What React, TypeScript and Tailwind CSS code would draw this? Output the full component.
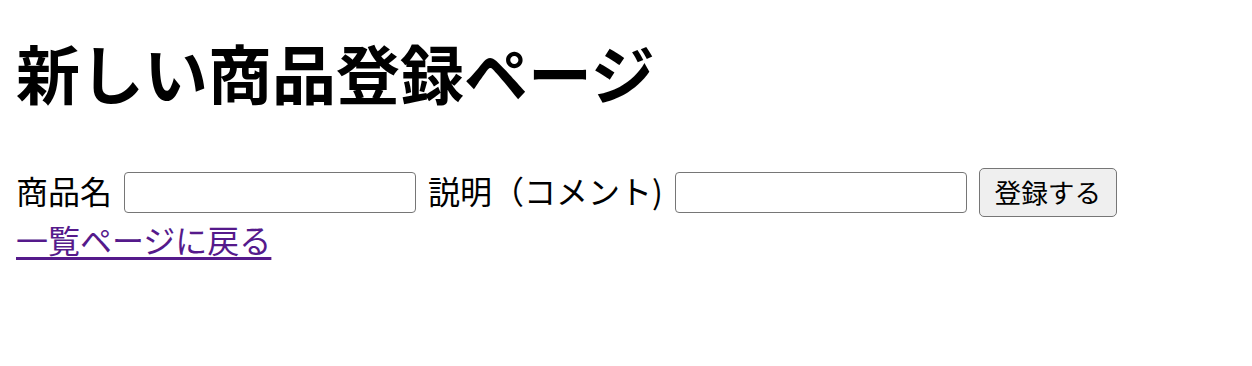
import React from "react"

export default function App() {
  return (
    <div className="min-h-[366px] bg-white px-4 text-black [font-family:'Noto_Sans_CJK_JP','Noto_Sans',sans-serif]">
      {/* Title */}
      <h1 className="pt-[31px] text-[64px] font-bold leading-[80px]">新しい商品登録ページ</h1>

      {/* Form row */}
      <form className="mt-[57px] flex h-[49px] items-center text-[32px] leading-none" onSubmit={(e) => e.preventDefault()}>
        <label className="mt-[-5px]">商品名</label>
        <input
          type="text"
          className="ml-3 h-[41px] w-[292px] rounded-[4px] border-[1.5px] border-[#767676] bg-white"
        />
        <label className="ml-3 mt-[-5px]">説明（コメント)</label>
        <input
          type="text"
          className="ml-3 h-[41px] w-[292px] rounded-[4px] border-[1.5px] border-[#767676] bg-white"
        />
        <button
          type="submit"
          className="ml-3 flex h-[49px] w-[138px] items-center justify-center rounded-[5px] border-[1.5px] border-[#767676] bg-[#efefef] text-[26.67px]"
        >
          登録する
        </button>
      </form>

      {/* Back link */}
      <a href="#" className="mt-[4px] block w-fit text-[32px] leading-[37px] text-[#551a8b] underline decoration-[2.5px] underline-offset-[4px]">
        一覧ページに戻る
      </a>
    </div>
  )
}
